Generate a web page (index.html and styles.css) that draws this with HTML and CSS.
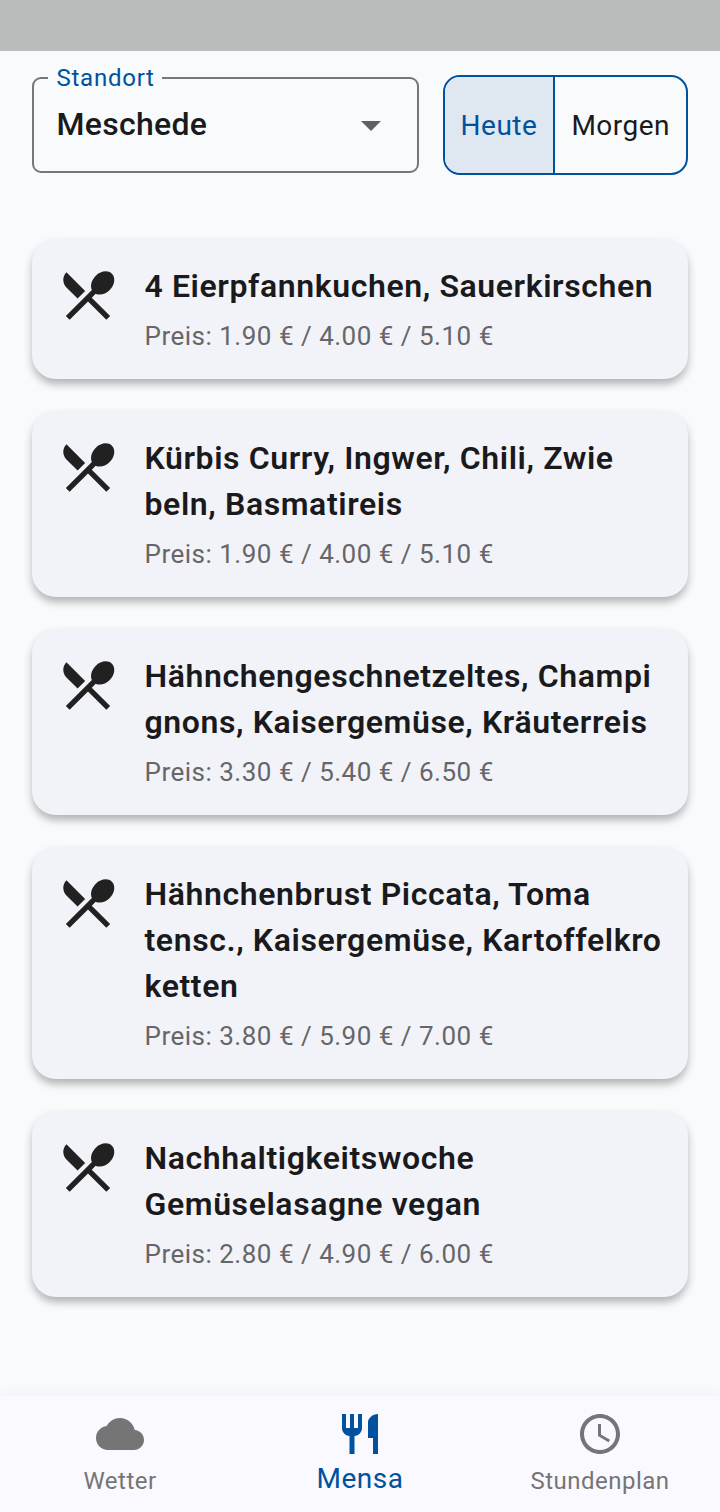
FILE: index.html
```html
<!DOCTYPE html>
<html lang="de">
<head>
<meta charset="utf-8">
<title>Mensa</title>
<link rel="stylesheet" href="styles.css">
</head>
<body>
<svg class="symbols" aria-hidden="true">
  <symbol id="meal" viewBox="0 0 24 24"><path d="M8.1 13.34l2.83-2.83L3.91 3.5c-1.56 1.56-1.56 4.09 0 5.66l4.19 4.18zm6.78-1.81c1.53.71 3.68.21 5.27-1.38 1.91-1.91 2.28-4.65.81-6.12-1.46-1.46-4.2-1.1-6.12.81-1.59 1.59-2.09 3.74-1.38 5.27L3.7 19.87l1.41 1.41L12 14.41l6.88 6.88 1.41-1.41L13.41 13l1.47-1.47z"/></symbol>
</svg>
<div class="status-bar"></div>
<header class="filters">
  <fieldset class="select">
    <legend class="select-label">Standort</legend>
    <div class="select-row">
      <span class="select-value">Meschede</span>
      <svg class="select-arrow" viewBox="0 0 24 24"><path d="M7 10l5 5 5-5z"/></svg>
    </div>
  </fieldset>
  <div class="toggle">
    <div class="toggle-item toggle-active">Heute</div>
    <div class="toggle-item">Morgen</div>
  </div>
</header>
<main class="meals">
  <article class="card">
    <svg class="card-icon"><use href="#meal"/></svg>
    <div class="card-text">
      <h2 class="title">4 Eierpfannkuchen, Sauerkirschen</h2>
      <p class="price">Preis: 1.90 € / 4.00 € / 5.10 €</p>
    </div>
  </article>
  <article class="card">
    <svg class="card-icon"><use href="#meal"/></svg>
    <div class="card-text">
      <h2 class="title">Kürbis Curry, Ingwer, Chili, Zwie<br>beln, Basmatireis</h2>
      <p class="price">Preis: 1.90 € / 4.00 € / 5.10 €</p>
    </div>
  </article>
  <article class="card">
    <svg class="card-icon"><use href="#meal"/></svg>
    <div class="card-text">
      <h2 class="title">Hähnchengeschnetzeltes, Champi<br>gnons, Kaisergemüse, Kräuterreis</h2>
      <p class="price">Preis: 3.30 € / 5.40 € / 6.50 €</p>
    </div>
  </article>
  <article class="card">
    <svg class="card-icon"><use href="#meal"/></svg>
    <div class="card-text">
      <h2 class="title">Hähnchenbrust Piccata, Toma<br>tensc., Kaisergemüse, Kartoffelkro<br>ketten</h2>
      <p class="price">Preis: 3.80 € / 5.90 € / 7.00 €</p>
    </div>
  </article>
  <article class="card">
    <svg class="card-icon"><use href="#meal"/></svg>
    <div class="card-text">
      <h2 class="title">Nachhaltigkeitswoche<br>Gemüselasagne vegan</h2>
      <p class="price">Preis: 2.80 € / 4.90 € / 6.00 €</p>
    </div>
  </article>
</main>
<nav class="nav">
  <div class="nav-item">
    <svg class="nav-icon" viewBox="0 0 24 24"><path d="M19.35 10.04C18.67 6.59 15.64 4 12 4 9.11 4 6.6 5.64 5.35 8.04 2.34 8.36 0 10.91 0 14c0 3.31 2.69 6 6 6h13c2.76 0 5-2.24 5-5 0-2.64-2.05-4.78-4.65-4.96z"/></svg>
    <span class="nav-label">Wetter</span>
  </div>
  <div class="nav-item nav-active">
    <svg class="nav-icon" viewBox="0 0 24 24"><path d="M11 9H9V2H7v7H5V2H3v7c0 2.12 1.66 3.84 3.75 3.97V22h2.5v-9.03C11.34 12.84 13 11.12 13 9V2h-2v7zm5-3v8h2.5v8H21V2c-2.76 0-5 2.24-5 4z"/></svg>
    <span class="nav-label">Mensa</span>
  </div>
  <div class="nav-item">
    <svg class="nav-icon" viewBox="0 0 24 24"><path d="M11.99 2C6.47 2 2 6.48 2 12s4.47 10 9.99 10C17.52 22 22 17.52 22 12S17.52 2 11.99 2zM12 20c-4.42 0-8-3.58-8-8s3.58-8 8-8 8 3.58 8 8-3.58 8-8 8zm.5-13H11v6l5.25 3.15.75-1.23-4.5-2.67z"/></svg>
    <span class="nav-label">Stundenplan</span>
  </div>
</nav>
</body>
</html>
```
FILE: styles.css
```css
* { box-sizing: border-box; }
body {
  margin: 0;
  height: 1512px;
  display: flex;
  flex-direction: column;
  overflow: hidden;
  background: #f8fafc;
  color: #1a1a1c;
  font-family: Roboto, sans-serif;
}
svg { display: block; fill: currentColor; }
.symbols { display: none; }
.status-bar { height: 51px; flex: none; background: #b9bcbb; }

.filters {
  display: flex;
  align-items: flex-start;
  justify-content: space-between;
  height: 188px;
  flex: none;
  padding: 24px 32px 0;
}
.select {
  width: 386.5px;
  height: 109px;
  margin: -11px 0 0;
  padding: 0 22px 0 14px;
  border: 2px solid #777680;
  border-radius: 9px;
}
.select-label {
  height: 28px;
  padding: 0 7px 0 8.5px;
  color: #00519e;
  font-size: 24px;
  line-height: 28px;
  letter-spacing: 0.75px;
}
.select-row {
  display: flex;
  align-items: center;
  justify-content: space-between;
  height: 66px;
  padding-left: 8.5px;
}
.select-value { padding-bottom: 2px; font-size: 32px; font-weight: 500; line-height: 48px; letter-spacing: 0.3px; }
.select-arrow { width: 48px; height: 48px; color: #616161; }

.toggle {
  display: flex;
  width: 245.5px;
  height: 100px;
  border: 2px solid #00519e;
  border-radius: 17px;
  overflow: hidden;
}
.toggle-item {
  flex: 1;
  display: flex;
  align-items: center;
  justify-content: center;
  padding-left: 0.5px;
  font-size: 28px;
  letter-spacing: 0.5px;
}
.toggle-active {
  flex: 0 0 110.5px;
  border-right: 2px solid #00519e;
  background: #dfe7f0;
  color: #00519e;
}

.meals {
  display: flex;
  flex-direction: column;
  gap: 32px;
  flex: 1;
  padding: 0 32px;
}
.card {
  display: flex;
  gap: 24.5px;
  padding: 24px 16px 24px 24px;
  border-radius: 24px;
  background: #f2f3f9;
  box-shadow: 0 6px 8px -1px rgba(0, 0, 0, .22), 0 4px 10px rgba(0, 0, 0, .1);
}
.card-icon { width: 64px; height: 64px; margin-bottom: -24px; flex: none; color: #212121; }
.title {
  margin: 0 0 8px;
  font-size: 32px;
  font-weight: 600;
  line-height: 46px;
  letter-spacing: 0.6px;
  white-space: nowrap;
}
.price { margin: 0; color: #666668; font-size: 26px; line-height: 38px; letter-spacing: 0.5px; }

.nav {
  display: flex;
  height: 116px;
  flex: none;
  background: #faf9ff;
  box-shadow: 0 0 16px rgba(0, 0, 0, .05);
}
.nav-item {
  flex: 1;
  display: flex;
  flex-direction: column;
  align-items: center;
  padding-top: 14px;
  color: #757575;
}
.nav-icon { width: 48px; height: 48px; flex: none; }
.nav-label { margin-top: 9px; font-size: 24px; line-height: 28px; letter-spacing: 0.5px; }
.nav-active { color: #00519e; }
.nav-active .nav-label { margin-top: 4px; font-size: 28px; line-height: 33px; }
```
